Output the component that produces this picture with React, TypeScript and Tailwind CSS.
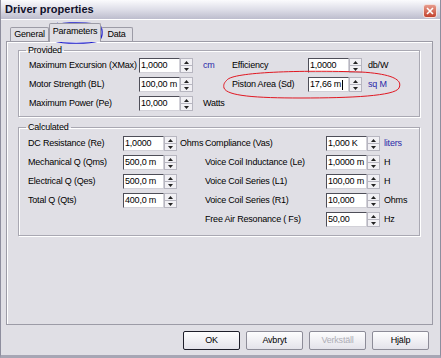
import React from "react";

const font = "font-['Liberation_Sans',Arial,sans-serif]";

function Arrow({ up }: { up?: boolean }) {
  return (
    <svg width="5" height="3" viewBox="0 0 5 3">
      <path d={up ? "M2.5 0 L5 3 L0 3 Z" : "M0 0 L5 0 L2.5 3 Z"} fill="#222" />
    </svg>
  );
}

function Spin({ value, cursor }: { value: string; cursor?: boolean }) {
  return (
    <div className="flex h-[15px] w-[54px]">
      <div className="flex h-full w-[41px] items-center border border-[#4e4e58] border-b-[#d2d1d8] border-r-[#d2d1d8] bg-white pl-[1px] text-black">
        <span className="whitespace-nowrap">{value}</span>
        {cursor && <span className="ml-[1px] h-[10px] w-px bg-black" />}
      </div>
      <div className="flex w-[13px] flex-col">
        <div className="flex flex-1 items-center justify-center border border-[#b7b6c0] bg-[#f1f0f4]">
          <Arrow up />
        </div>
        <div className="flex flex-1 items-center justify-center border border-t-0 border-[#b7b6c0] bg-[#f1f0f4]">
          <Arrow />
        </div>
      </div>
    </div>
  );
}

function Label({ children }: { children: React.ReactNode }) {
  return <span className="whitespace-nowrap text-black">{children}</span>;
}

function Unit({ children, blue }: { children?: React.ReactNode; blue?: boolean }) {
  return (
    <span className={blue ? "whitespace-nowrap text-[#2a2aa8]" : "whitespace-nowrap text-black"}>
      {children}
    </span>
  );
}

function Group({ title, children, className }: { title: string; children: React.ReactNode; className?: string }) {
  return (
    <fieldset
      className={`w-[402px] border border-[#a9a8b2] shadow-[inset_1px_1px_0_#fff,1px_1px_0_#fff] ${className ?? ""}`}
    >
      <legend className="ml-[7px] px-[2px] leading-[11px] text-black">{title}</legend>
      {children}
    </fieldset>
  );
}

function Button({ children, primary, disabled }: { children: React.ReactNode; primary?: boolean; disabled?: boolean }) {
  return (
    <div
      className={`flex h-[19px] w-[57px] items-center justify-center rounded-[2px] border bg-gradient-to-b from-[#fdfdfe] to-[#e4e3ea] ${
        primary ? "border-[#1e1e2a]" : "border-[#8d8c98]"
      } ${disabled ? "text-[#aeadb6]" : "text-black"}`}
    >
      {children}
    </div>
  );
}

export default function App() {
  return (
    <div
      className={`relative flex h-[358px] w-[441px] flex-col overflow-hidden border-x border-b-[3px] border-[#8e8e9e] border-b-[#a6a6b4] bg-[#e0dfe5] text-[9px] tracking-[-0.2px] ${font}`}
    >
      {/* title bar */}
      <div className="flex h-[20px] shrink-0 items-center justify-between border-b border-white bg-gradient-to-b from-[#fbfbfd] via-[#dedee8] to-[#bdbdcd] pl-[4px] pr-[3px]">
        <span className="text-[11px] font-bold tracking-[0px] text-[#10102a]">Driver properties</span>
        <div className="mt-[2px] flex h-[14px] w-[14px] items-center justify-center rounded-[3px] border border-[#f4e0dc] bg-gradient-to-b from-[#e69a8c] to-[#c2402c]">
          <svg width="8" height="8" viewBox="0 0 8 8">
            <path d="M1 1 L7 7 M7 1 L1 7" stroke="#fff" strokeWidth="1.6" />
          </svg>
        </div>
      </div>

      <div className="flex flex-col pl-[5px] pt-[3px]">
        {/* tabs */}
        <div className="relative z-10 -mb-px flex h-[19px] items-end pl-[4px]">
          <div className="flex h-[15px] w-[39px] items-center justify-center rounded-t-[2px] border border-b-0 border-[#9c9ba6] text-black">
            General
          </div>
          <div className="flex h-[19px] w-[52px] items-center justify-center rounded-t-[2px] border border-b-0 border-[#9c9ba6] bg-[#e0dfe5] pb-[2px] text-black">
            Parameters
          </div>
          <div className="flex h-[15px] w-[32px] items-center justify-center rounded-t-[2px] border border-b-0 border-l-0 border-[#9c9ba6] text-black">
            Data
          </div>
        </div>

        {/* panel */}
        <div className="flex h-[284px] w-[427px] flex-col border border-[#9c9ba6] shadow-[inset_1px_1px_0_#fff] pl-[11px] pt-[3px]">
          <Group title="Provided" className="pb-[5px]">
            <div className="grid grid-cols-[110px_54px_39px_76px_54px_1fr] auto-rows-[15px] items-center gap-y-[4px] pl-[10px] pt-[2px]">
              <Label>Maximum Excursion (XMax)</Label>
              <Spin value="1,0000" />
              <span className="pl-[10px]"><Unit blue>cm</Unit></span>
              <Label>Efficiency</Label>
              <Spin value="1,0000" />
              <span className="pl-[6px]"><Unit>db/W</Unit></span>

              <Label>Motor Strength (BL)</Label>
              <Spin value="100,00 m" />
              <span />
              <Label>Piston Area (Sd)</Label>
              <Spin value="17,66 m" cursor />
              <span className="pl-[6px]"><Unit blue>sq M</Unit></span>

              <Label>Maximum Power (Pe)</Label>
              <Spin value="10,000" />
              <span className="pl-[10px]"><Unit>Watts</Unit></span>
            </div>
          </Group>

          <Group title="Calculated" className="mt-[5px] pb-[8px]">
            <div className="grid grid-cols-[95px_54px_28px_121px_54px_1fr] auto-rows-[15px] items-center gap-y-[4px] pl-[9px] pt-[3px]">
              <Label>DC Resistance (Re)</Label>
              <Spin value="1,0000" />
              <span className="pl-[3px]"><Unit>Ohms</Unit></span>
              <Label>Compliance (Vas)</Label>
              <Spin value="1,000 K" />
              <span className="pl-[4px]"><Unit blue>liters</Unit></span>

              <Label>Mechanical Q (Qms)</Label>
              <Spin value="500,0 m" />
              <span />
              <Label>Voice Coil Inductance (Le)</Label>
              <Spin value="1,0000 m" />
              <span className="pl-[4px]"><Unit>H</Unit></span>

              <Label>Electrical Q (Qes)</Label>
              <Spin value="500,0 m" />
              <span />
              <Label>Voice Coil Series (L1)</Label>
              <Spin value="100,00 m" />
              <span className="pl-[4px]"><Unit>H</Unit></span>

              <Label>Total Q (Qts)</Label>
              <Spin value="400,0 m" />
              <span />
              <Label>Voice Coil Series (R1)</Label>
              <Spin value="10,000" />
              <span className="pl-[4px]"><Unit>Ohms</Unit></span>

              <span className="col-start-4"><Label>Free Air Resonance ( Fs)</Label></span>
              <Spin value="50,00" />
              <span className="pl-[4px]"><Unit>Hz</Unit></span>
            </div>
          </Group>
        </div>

        {/* buttons */}
        <div className="mt-[6px] flex gap-[6px] pl-[177px]">
          <Button primary>OK</Button>
          <Button>Avbryt</Button>
          <Button disabled>Verkställ</Button>
          <Button>Hjälp</Button>
        </div>
      </div>

      {/* hand-drawn annotations */}
      <svg className="pointer-events-none absolute left-0 top-0" width="441" height="358" viewBox="0 0 441 358">
        <path
          d="M52 27 C56 22 78 22 96 24 C103 26 102 37 98 41 C88 44 62 44 53 41 C47 38 48 31 52 27 C54 25 55 24 57 23"
          fill="none"
          stroke="#1c1ccc"
          strokeWidth="1.2"
        />
        <path
          d="M226 80 C232 72 300 70 360 72 C392 74 402 80 398 88 C394 96 350 98 300 98 C255 98 226 96 223 88 C222 84 224 82 226 80"
          fill="none"
          stroke="#e01822"
          strokeWidth="1"
        />
      </svg>
    </div>
  );
}
